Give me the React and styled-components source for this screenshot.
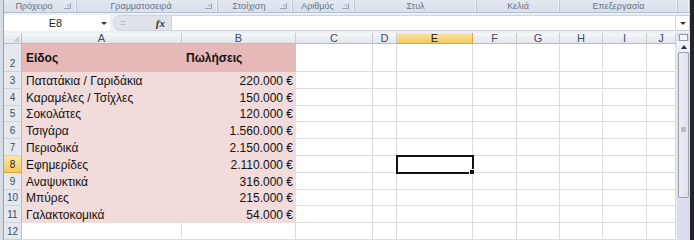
import React from 'react'
import styled, { createGlobalStyle, css } from 'styled-components'

const GlobalStyle = createGlobalStyle`
  html, body {
    margin: 0;
    padding: 0;
    background: #fff;
    overflow: hidden;
  }
  body {
    font-family: "Liberation Sans", Arial, sans-serif;
  }
`

const ribbonGroups = [
  { label: 'Πρόχειρο', width: 73, launcher: true },
  { label: 'Γραμματοσειρά', width: 141, launcher: true },
  { label: 'Στοίχιση', width: 75, launcher: true },
  { label: 'Αριθμός', width: 62, launcher: true },
  { label: 'Στυλ', width: 122 },
  { label: 'Κελιά', width: 83 },
  { label: 'Επεξεργασία', width: 118 }
]

const columns = [
  { name: 'A', width: 160 },
  { name: 'B', width: 114 },
  { name: 'C', width: 77 },
  { name: 'D', width: 24 },
  { name: 'E', width: 76 },
  { name: 'F', width: 44 },
  { name: 'G', width: 43 },
  { name: 'H', width: 43 },
  { name: 'I', width: 44 },
  { name: 'J', width: 29 }
]

const sales = [
  ['Πατατάκια / Γαριδάκια', '220.000 €'],
  ['Καραμέλες / Τσίχλες', '150.000 €'],
  ['Σοκολάτες', '120.000 €'],
  ['Τσιγάρα', '1.560.000 €'],
  ['Περιοδικά', '2.150.000 €'],
  ['Εφημερίδες', '2.110.000 €'],
  ['Αναψυκτικά', '316.000 €'],
  ['Μπύρες', '215.000 €'],
  ['Γαλακτοκομικά', '54.000 €']
]

const Window = styled.div`
  width: 694px;
  height: 240px;
  display: grid;
  grid-template-columns: 4px 1fr 4px;
  overflow: hidden;
`

const LeftEdge = styled.div`
  background: #d6dce4;
  border-right: 1px solid #98a3b2;
  box-sizing: border-box;
`

const RightEdge = styled.div`
  background: #222428;
`

const Main = styled.div`
  display: flex;
  flex-direction: column;
  min-width: 0;
`

const Ribbon = styled.div`
  height: 13px;
  display: flex;
  background: linear-gradient(#e2e8f0, #d8e0ea);
  border-bottom: 1px solid #b3c0d0;
  box-sizing: border-box;
`

const Group = styled.div`
  width: ${p => p.$width}px;
  flex: ${p => (p.$grow ? 1 : 'none')};
  display: flex;
  align-items: center;
  border-right: 1px solid #bcc6d4;
  box-shadow: inset -1px 0 0 #eef2f7;
  box-sizing: border-box;
`

const GroupLabel = styled.span`
  flex: 1;
  text-align: center;
  font-size: 9px;
  color: #6a7283;
  line-height: 12px;
`

const Launcher = styled.span`
  width: 6px;
  height: 5px;
  margin-right: 5px;
  border-right: 1px solid #9aa5b5;
  border-bottom: 1px solid #9aa5b5;
  position: relative;
  &::after {
    content: '';
    position: absolute;
    right: 1px;
    bottom: 1px;
    width: 3px;
    height: 1px;
    background: #9aa5b5;
    transform: rotate(45deg);
    transform-origin: right bottom;
  }
`

const FormulaBar = styled.div`
  height: 20px;
  display: flex;
  align-items: center;
  background: #eceff3;
  box-sizing: border-box;
  padding: 2px 0;
`

const NameBox = styled.div`
  width: 106px;
  height: 16px;
  background: #fff;
  display: flex;
  align-items: center;
  font-size: 11px;
  color: #222;
  box-sizing: border-box;
`

const NameText = styled.span`
  flex: 1;
  text-align: center;
  padding-left: 6px;
`

const DropArrow = styled.span`
  width: 0;
  height: 0;
  margin-right: ${p => (p.$flush ? 0 : 3)}px;
  border-left: 3px solid transparent;
  border-right: 3px solid transparent;
  border-top: 3px solid #333;
`

const FxPill = styled.div`
  width: 58px;
  height: 16px;
  margin-left: 3px;
  border-radius: 8px 0 0 8px;
  background: #dfe3e9;
  border: 1px solid #cfd5dd;
  border-right: none;
  box-sizing: border-box;
  display: flex;
  align-items: center;
  justify-content: space-between;
  padding: 0 6px 0 6px;
  font-size: 10px;
  color: #b7bec8;
`

const FxMark = styled.span`
  font-family: "Liberation Serif", serif;
  font-style: italic;
  font-weight: bold;
  font-size: 11px;
  color: #333;
`

const FormulaInput = styled.div`
  flex: 1;
  height: 16px;
  background: #fff;
  border: 1px solid #d0d6de;
  box-sizing: border-box;
`

const ExpandButton = styled.div`
  width: 14px;
  height: 16px;
  background: #fff;
  border: 1px solid #c4ccd6;
  border-left: none;
  box-sizing: border-box;
  display: flex;
  align-items: center;
  justify-content: center;
`

const SheetArea = styled.div`
  display: flex;
  height: 207px;
`

const Sheet = styled.div`
  display: grid;
  grid-template-columns: 18px ${columns.map(c => `${c.width}px`).join(' ')};
  grid-template-rows: 11px 28px repeat(10, 1fr);
  height: 207px;
  width: 672px;
`

const headerBase = css`
  box-sizing: border-box;
  display: flex;
  justify-content: center;
  font-size: 11px;
  color: #3f4b5d;
  overflow: hidden;
`

const activeHeader = css`
  background: linear-gradient(#fbe7a6, #f3c85f);
  border-color: #e0a541;
  color: #222;
`

const Corner = styled.div`
  ${headerBase};
  background: linear-gradient(#f4f6f9, #e1e5ea);
  border-right: 1px solid #b8c1cc;
  border-bottom: 1px solid #b8c1cc;
  position: relative;
  &::after {
    content: '';
    position: absolute;
    right: 2px;
    bottom: 1px;
    border-left: 6px solid transparent;
    border-bottom: 6px solid #c8ced6;
  }
`

const ColHeader = styled.div`
  ${headerBase};
  align-items: center;
  line-height: 11px;
  background: linear-gradient(#f6f8fa, #e2e6eb);
  border-right: 1px solid #c3cad3;
  border-bottom: 1px solid #b4bec9;
  ${p => p.$active && activeHeader};
`

const RowHeader = styled.div`
  ${headerBase};
  align-items: flex-end;
  font-size: 10px;
  line-height: 12px;
  padding-bottom: 1px;
  background: #e5e9ee;
  border-right: 1px solid #b4bec9;
  border-bottom: 1px solid #cdd3da;
  ${p => p.$active && activeHeader};
`

const fills = {
  head: '#e6b8b7',
  body: '#f2dcdb'
}

const Cell = styled.div`
  box-sizing: border-box;
  display: flex;
  align-items: ${p => (p.$middle ? 'center' : 'flex-end')};
  justify-content: ${p => (p.$right ? 'flex-end' : 'flex-start')};
  padding: 0 3px 1px 4px;
  font-size: 12px;
  line-height: 14px;
  font-weight: ${p => (p.$bold ? 'bold' : 'normal')};
  color: #111;
  white-space: nowrap;
  position: relative;
  ${p =>
    p.$fill
      ? css`
          background: ${fills[p.$fill]};
        `
      : css`
          background: #fff;
          border-right: 1px solid #dadcdf;
          border-bottom: 1px solid #dadcdf;
        `}
  ${p =>
    p.$selected &&
    css`
      outline: 2px solid #111;
      outline-offset: -1px;
      z-index: 1;
      &::after {
        content: '';
        position: absolute;
        right: -3px;
        bottom: -3px;
        width: 4px;
        height: 4px;
        background: #111;
        border: 1px solid #fff;
      }
    `}
`

const Scrollbar = styled.div`
  width: 14px;
  display: flex;
  flex-direction: column;
  background: #dcdcef;
  border-left: 1px solid #e8eaf0;
  box-sizing: border-box;
`

const SplitBox = styled.div`
  height: 5px;
  margin: 1px 2px 0;
  border: 1px solid #8e98a8;
  background: #f4f5f8;
`

const ArrowButton = styled.div`
  height: 11px;
  display: flex;
  align-items: center;
  justify-content: center;
  background: #eef0f5;
  &::before {
    content: '';
    border-left: 3px solid transparent;
    border-right: 3px solid transparent;
    border-bottom: 4px solid #2b2f36;
  }
`

const Thumb = styled.div`
  height: 146px;
  margin: 0 1px;
  background: linear-gradient(90deg, #eceef3, #dfe2ea);
  border: 1px solid #9aa2b1;
  border-radius: 2px;
  box-sizing: border-box;
  display: flex;
  justify-content: center;
  padding-top: 74px;
`

const Grip = styled.div`
  width: 5px;
  height: 5px;
  background: #b7bcc8;
`

const dataRows = [
  { n: 2, a: 'Είδος', b: 'Πωλήσεις', fill: 'head', bold: true },
  ...sales.map((s, i) => ({ n: i + 3, a: s[0], b: s[1], fill: 'body' })),
  { n: 12, a: '', b: '' }
]

export default function App() {
  const activeCol = 'E'
  const activeRow = 8

  return (
    <>
      <GlobalStyle />
      <Window>
        <LeftEdge />
        <Main>
          <Ribbon>
            {ribbonGroups.map(g => (
              <Group key={g.label} $width={g.width}>
                <GroupLabel>{g.label}</GroupLabel>
                {g.launcher && <Launcher />}
              </Group>
            ))}
            <Group $grow />
          </Ribbon>

          <FormulaBar>
            <NameBox>
              <NameText>E8</NameText>
              <DropArrow />
            </NameBox>
            <FxPill>
              <span>=</span>
              <FxMark>fx</FxMark>
            </FxPill>
            <FormulaInput />
            <ExpandButton>
              <DropArrow $flush />
            </ExpandButton>
          </FormulaBar>

          <SheetArea>
            <Sheet>
              <Corner />
              {columns.map(c => (
                <ColHeader key={c.name} $active={c.name === activeCol}>
                  {c.name}
                </ColHeader>
              ))}

              {dataRows.map(r => (
                <React.Fragment key={r.n}>
                  <RowHeader $active={r.n === activeRow}>{r.n}</RowHeader>
                  <Cell $fill={r.fill} $bold={r.bold} $middle={r.n === 2}>
                    {r.a}
                  </Cell>
                  <Cell $fill={r.fill} $bold={r.bold} $middle={r.n === 2} $right={!r.bold}>
                    {r.b}
                  </Cell>
                  {columns.slice(2).map(c => (
                    <Cell
                      key={c.name}
                      $selected={c.name === activeCol && r.n === activeRow}
                    />
                  ))}
                </React.Fragment>
              ))}
            </Sheet>

            <Scrollbar>
              <SplitBox />
              <ArrowButton />
              <Thumb>
                <Grip />
              </Thumb>
            </Scrollbar>
          </SheetArea>
        </Main>
        <RightEdge />
      </Window>
    </>
  )
}
